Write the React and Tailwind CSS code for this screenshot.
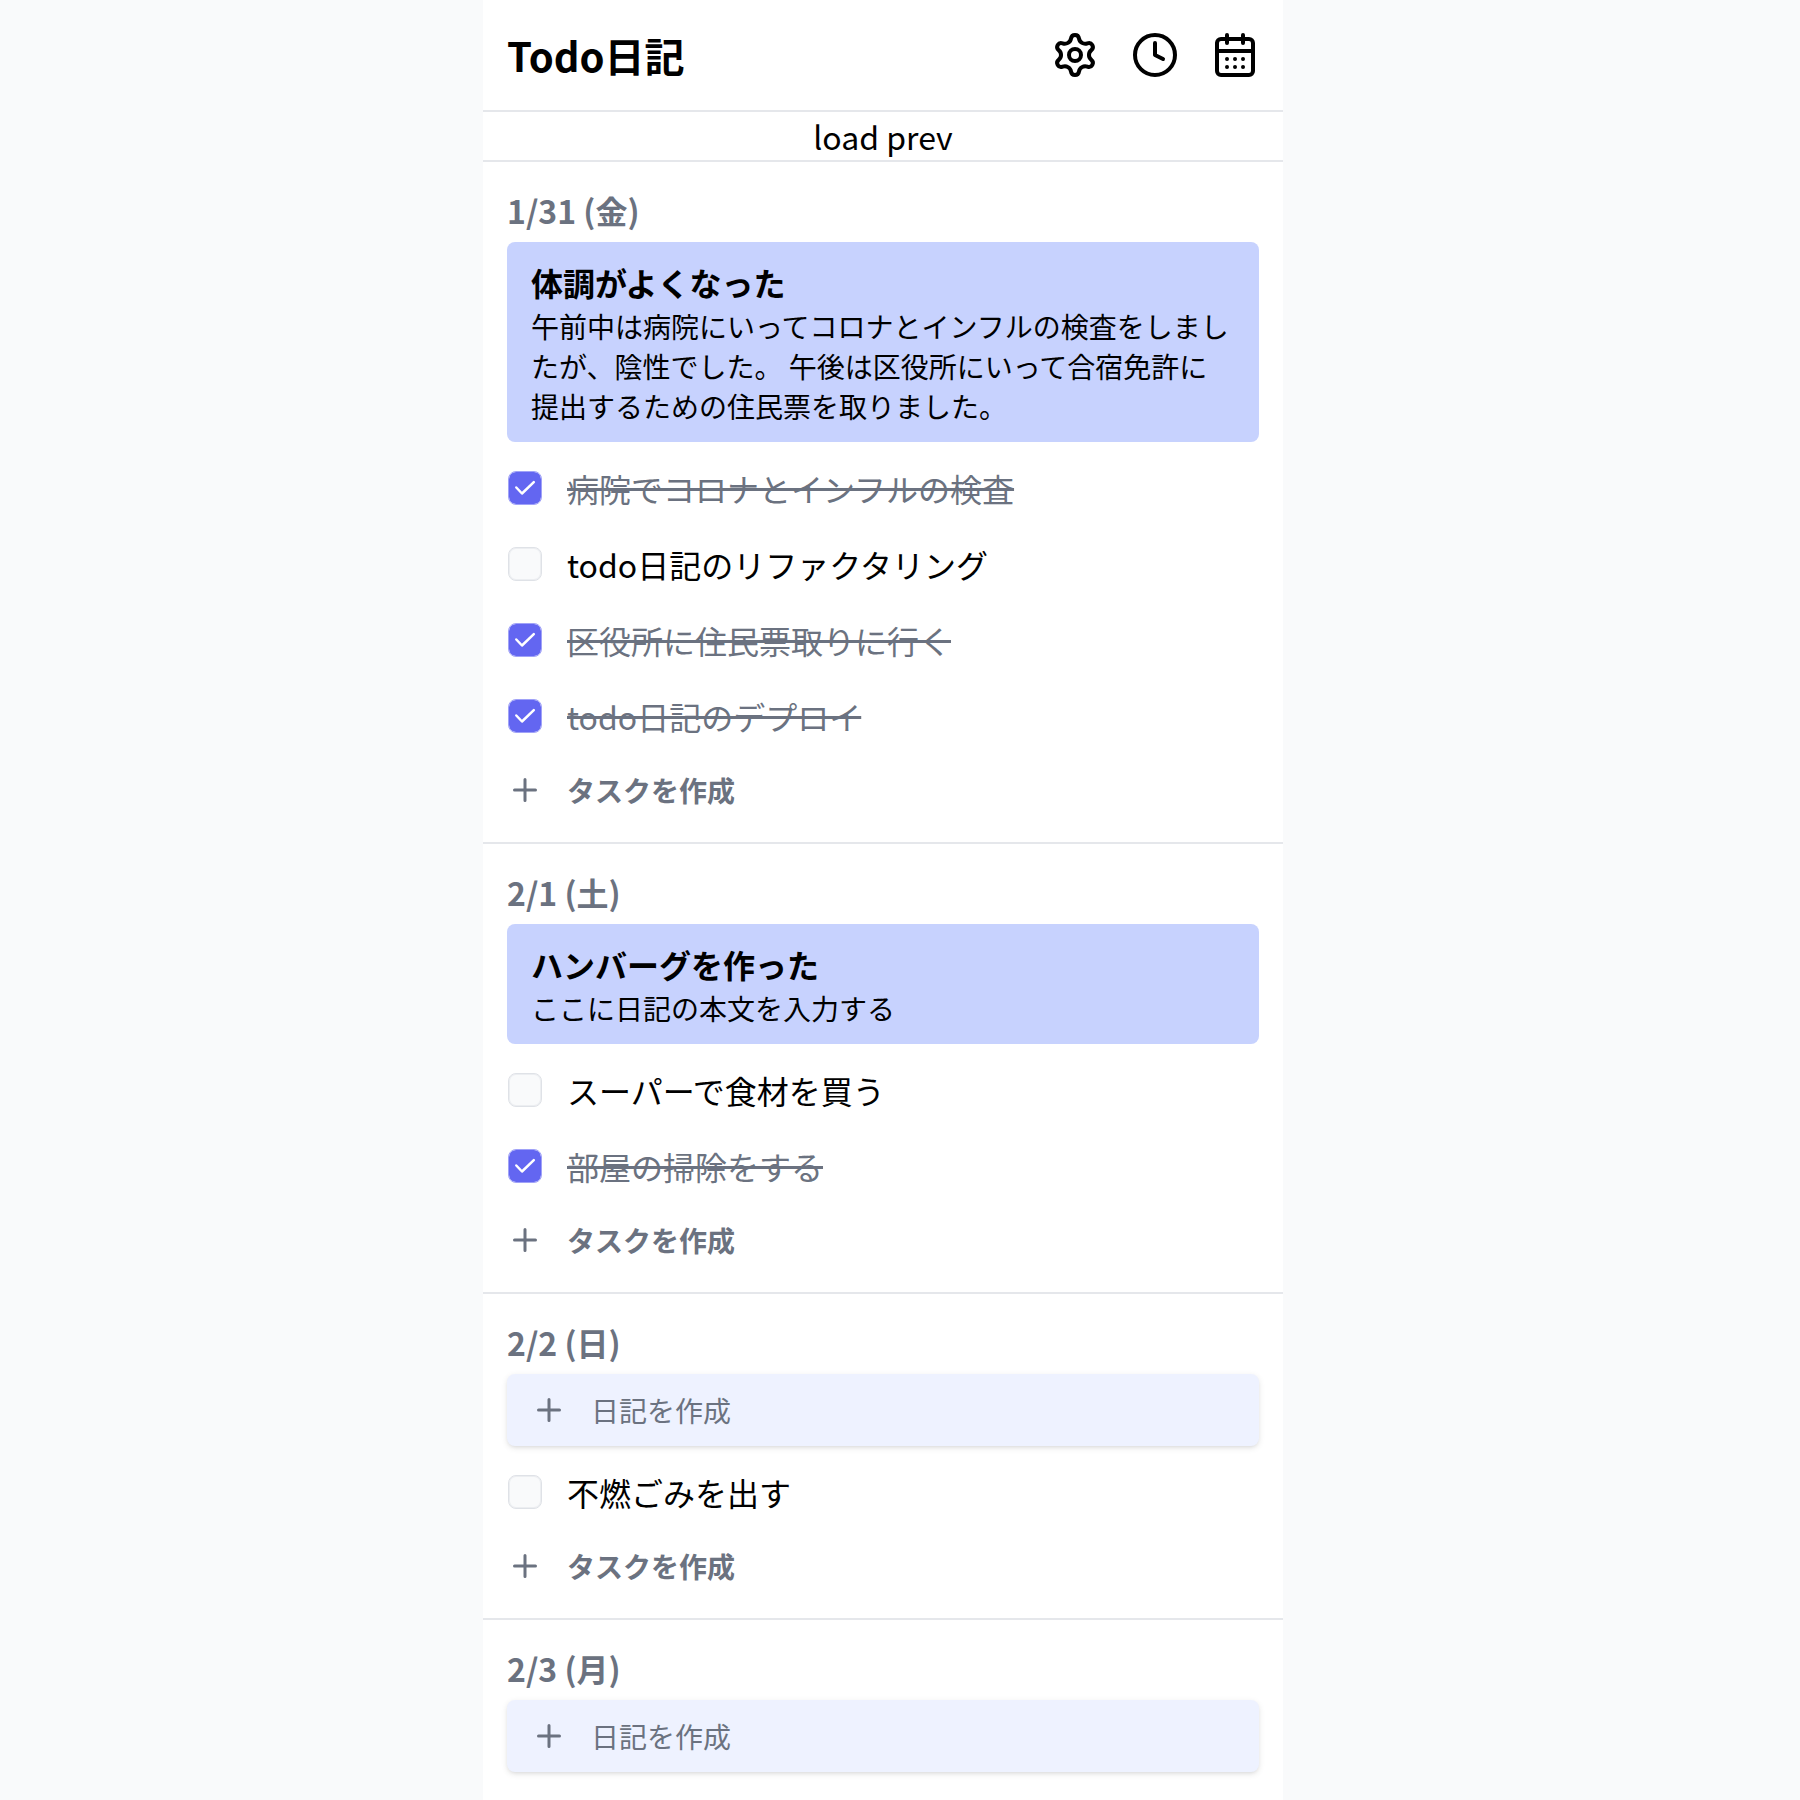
import { Clock } from "lucide-react";

function Gear() {
  return (
    <svg className="size-12" viewBox="0 0 24 24" fill="none" stroke="currentColor" strokeWidth="2" strokeLinecap="round" strokeLinejoin="round">
      <circle cx="12" cy="12" r="3" />
      <path d="M10.02 3.7A2 2 0 0 1 13.98 3.7A3.11 3.11 0 0 0 18.2 6.14A2 2 0 0 1 20.17 9.56A3.11 3.11 0 0 0 20.17 14.44A2 2 0 0 1 18.2 17.86A3.11 3.11 0 0 0 13.98 20.3A2 2 0 0 1 10.02 20.3A3.11 3.11 0 0 0 5.8 17.86A2 2 0 0 1 3.83 14.44A3.11 3.11 0 0 0 3.83 9.56A2 2 0 0 1 5.8 6.14A3.11 3.11 0 0 0 10.02 3.7Z" />
    </svg>
  );
}

function Calendar() {
  return (
    <svg className="size-12" viewBox="0 0 24 24" fill="none" stroke="currentColor" strokeWidth="2" strokeLinecap="round" strokeLinejoin="round">
      <rect x="3" y="4" width="18" height="18" rx="2" />
      <path d="M3 10h18M8 2v4M16 2v4M8 14h.01M12 14h.01M16 14h.01M8 18h.01M12 18h.01M16 18h.01" />
    </svg>
  );
}

function Plus() {
  return (
    <svg className="size-9 shrink-0" viewBox="0 0 24 24" fill="none" stroke="currentColor" strokeWidth="2" strokeLinecap="round">
      <path d="M12 5v14M5 12h14" />
    </svg>
  );
}

function Checkbox({ checked }) {
  return checked ? (
    <span className="flex size-[34px] shrink-0 items-center justify-center rounded-lg border border-[#a0a2f8] bg-[#6366f1] bg-clip-padding text-white">
      <svg className="size-6" viewBox="0 0 24 24" fill="none" stroke="currentColor" strokeWidth="2.5" strokeLinecap="round" strokeLinejoin="round">
        <path d="M3.3 11.5L9 17.5L20.8 6.2" />
      </svg>
    </span>
  ) : (
    <span className="size-[34px] shrink-0 rounded-lg border border-[#dfe2e7] bg-[#f9fafb] shadow-[inset_0_0_0_1px_#eceef1]" />
  );
}

const days = [
  {
    date: "1/31 (金)",
    diary: {
      title: "体調がよくなった",
      body: "午前中は病院にいってコロナとインフルの検査をしましたが、陰性でした。 午後は区役所にいって合宿免許に提出するための住民票を取りました。",
    },
    tasks: [
      { text: "病院でコロナとインフルの検査", done: true },
      { text: "todo日記のリファクタリング", done: false },
      { text: "区役所に住民票取りに行く", done: true },
      { text: "todo日記のデプロイ", done: true },
    ],
  },
  {
    date: "2/1 (土)",
    diary: { title: "ハンバーグを作った", body: "ここに日記の本文を入力する" },
    tasks: [
      { text: "スーパーで食材を買う", done: false },
      { text: "部屋の掃除をする", done: true },
    ],
  },
  { date: "2/2 (日)", tasks: [{ text: "不燃ごみを出す", done: false }] },
  { date: "2/3 (月)" },
];

function Tasks({ tasks }) {
  return (
    <>
      <ul className="mt-2">
        {tasks.map((t) => (
          <li key={t.text} className="flex h-[76px] items-center gap-[25px] pl-px">
            <Checkbox checked={t.done} />
            <span className={t.done ? "text-[32px] leading-[48px] text-[#6b7280] line-through" : "text-[32px] leading-[48px]"}>{t.text}</span>
          </li>
        ))}
      </ul>
      <button className="flex h-[72px] items-center gap-6 text-[28px] leading-10 font-bold text-[#6b7280]">
        <Plus />
        タスクを作成
      </button>
    </>
  );
}

function Day({ day }) {
  return (
    <section className="border-b-2 border-[#e5e7eb] px-6 pt-6 pb-4 last:border-b-0">
      <h2 className="mb-2 text-[32px] leading-[48px] font-bold text-[#6b7280]">{day.date}</h2>
      {day.diary ? (
        <article className="rounded-lg bg-[#c7d2fe] px-6 py-4">
          <h3 className="text-[32px] leading-[48px] font-bold">{day.diary.title}</h3>
          <p className="text-[28px] leading-10">{day.diary.body}</p>
        </article>
      ) : (
        <button className="flex h-[72px] w-full items-center gap-6 rounded-lg bg-[#eef2ff] px-6 text-[28px] leading-10 text-[#6b7280] shadow-[0_2px_6px_rgba(0,0,0,0.1),0_2px_4px_-2px_rgba(0,0,0,0.1)]">
          <Plus />
          日記を作成
        </button>
      )}
      {day.tasks && <Tasks tasks={day.tasks} />}
    </section>
  );
}

export default function App() {
  return (
    <div lang="ja" className="h-[1800px] overflow-hidden bg-[#f9fafb] font-['Noto_Sans_CJK_JP',sans-serif] text-black">
      <main className="ml-[483px] flex h-full w-[800px] flex-col bg-white">
        <header className="flex h-28 shrink-0 items-center justify-between border-b-2 border-[#e5e7eb] px-6">
          <h1 className="text-[40px] leading-[56px] font-bold">Todo日記</h1>
          <nav className="flex gap-8">
            <Gear />
            <Clock className="size-12" />
            <Calendar />
          </nav>
        </header>
        <button className="h-[50px] w-full shrink-0 border-b-2 border-[#e5e7eb] text-center text-[32px] leading-[48px]">load prev</button>
        <div>
          {days.map((d) => (
            <Day key={d.date} day={d} />
          ))}
        </div>
      </main>
    </div>
  );
}
